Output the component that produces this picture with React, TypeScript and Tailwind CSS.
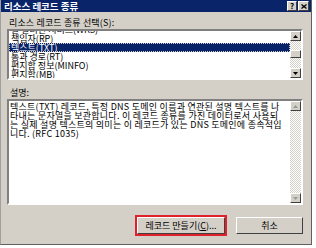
import React from "react";

const ITEMS = [
  "잘 알려진 서비스(WKS)",
  "책임자(RP)",
  "텍스트(TXT)",
  "통과 경로(RT)",
  "편지함 정보(MINFO)",
  "편지함(MB)",
];

// 원본 화면의 줄바꿈 그대로
const DESC_LINES = [
  "텍스트(TXT) 레코드, 특정 DNS 도메인 이름과 연관된 설명 텍스트를 나",
  "타내는 문자열을 보관합니다. 이 레코드 종류를 가진 데이터로서 사용되",
  "는 실제 설명 텍스트의 의미는 이 레코드가 있는 DNS 도메인에 종속적입",
  "니다. (RFC 1035)",
];

function ArrowButton({ up, disabled }: { up?: boolean; disabled?: boolean }) {
  return (
    <div className="flex h-[10px] w-[11px] shrink-0 items-center justify-center border border-t-white border-l-white border-r-[#404040] border-b-[#404040] bg-[#d4d0c8]">
      <svg width="5" height="3" viewBox="0 0 5 3">
        <path d={up ? "M2.5 0L5 3H0Z" : "M0 0H5L2.5 3Z"} fill={disabled ? "#9a9a9a" : "#000"} />
      </svg>
    </div>
  );
}

// 체크무늬 스크롤바 트랙
function ScrollBar({ thumb, disabled }: { thumb?: boolean; disabled?: boolean }) {
  return (
    <div className="flex w-[11px] flex-col">
      <ArrowButton up disabled={disabled} />
      <div className="flex flex-1 flex-col bg-[image:repeating-conic-gradient(#d4d0c8_0%_25%,#ffffff_0%_50%)] bg-[length:2px_2px]">
        {thumb && (
          <div className="mt-[9px] h-[8px] w-[11px] border border-t-white border-l-white border-r-[#404040] border-b-[#404040] bg-[#d4d0c8]" />
        )}
      </div>
      <ArrowButton disabled={disabled} />
    </div>
  );
}

export default function App() {
  return (
    <div className="h-[248px] w-[316px] bg-white font-['Noto_Sans_CJK_KR','Noto_Sans',sans-serif] text-[9px] leading-[9px] text-black">
      <div className="flex h-[245px] w-[312px] flex-col border-l border-r border-b border-l-[#a0a0a0] border-r-[#606060] border-b-[#606060] bg-[#d4d0c8]">
        {/* 제목 표시줄 */}
        <div className="flex h-[12px] items-center bg-[#0a246a] pl-[3px] pr-[2px]">
          <span className="flex-1 text-[9.5px] font-bold text-white">리소스 레코드 종류</span>
          <div className="flex gap-[1px]">
            <div className="flex h-[10px] w-[10px] items-center justify-center border border-t-white border-l-white border-r-[#404040] border-b-[#404040] bg-[#d4d0c8] text-[8px] font-bold leading-none">
              ?
            </div>
            <div className="flex h-[10px] w-[11px] items-center justify-center border border-t-white border-l-white border-r-[#404040] border-b-[#404040] bg-[#d4d0c8]">
              <svg width="6" height="5" viewBox="0 0 6 5">
                <path d="M0.5 0.5L5.5 4.5M5.5 0.5L0.5 4.5" stroke="#000" strokeWidth="1.3" />
              </svg>
            </div>
          </div>
        </div>

        <div className="flex flex-1 flex-col pl-[6px] pr-[8px]">
          <div className="mt-[6px] ml-[2px] h-[11px] tracking-[0.15px]">리소스 레코드 종류 선택(S):</div>

          {/* 목록 */}
          <div className="flex h-[51px] border-2 border-t-[#808080] border-l-[#808080] border-b-white border-r-white bg-white">
            <div className="flex-1 overflow-hidden">
              <div className="-mt-[6px]">
                {ITEMS.map((item) => (
                  <div
                    key={item}
                    className={
                      item === "텍스트(TXT)"
                        ? "h-[9px] bg-[#0a246a] pl-[2px] leading-[9px] text-white outline-1 -outline-offset-1 outline-dotted outline-[#d4d0c8]"
                        : "h-[9px] pl-[2px] leading-[9px]"
                    }
                  >
                    {item}
                  </div>
                ))}
              </div>
            </div>
            <ScrollBar thumb />
          </div>

          <div className="mt-[8px] ml-[3px] h-[11px]">설명:</div>

          {/* 설명 */}
          <div className="flex h-[106px] border-2 border-t-[#808080] border-l-[#808080] border-b-white border-r-white bg-white">
            <div className="flex-1 overflow-hidden pl-[1px] pt-[1px] leading-[9px]">
              {DESC_LINES.map((line) => (
                <div key={line} className="whitespace-nowrap tracking-[0.25px]">
                  {line}
                </div>
              ))}
            </div>
            <ScrollBar disabled />
          </div>

          {/* 버튼 */}
          <div className="mt-[10px] flex items-center justify-end gap-[9px]">
            <div className="border-2 border-[#e0202a]">
              <button className="flex h-[17px] w-[88px] items-center justify-center border border-t-white border-l-white border-r-[#404040] border-b-[#404040] bg-[#d4d0c8]">
                레코드 만들기(<span className="underline">C</span>)...
              </button>
            </div>
            <button className="flex h-[17px] w-[67px] items-center justify-center border border-t-white border-l-white border-r-[#404040] border-b-[#404040] bg-[#d4d0c8]">
              취소
            </button>
          </div>
        </div>
      </div>
    </div>
  );
}
